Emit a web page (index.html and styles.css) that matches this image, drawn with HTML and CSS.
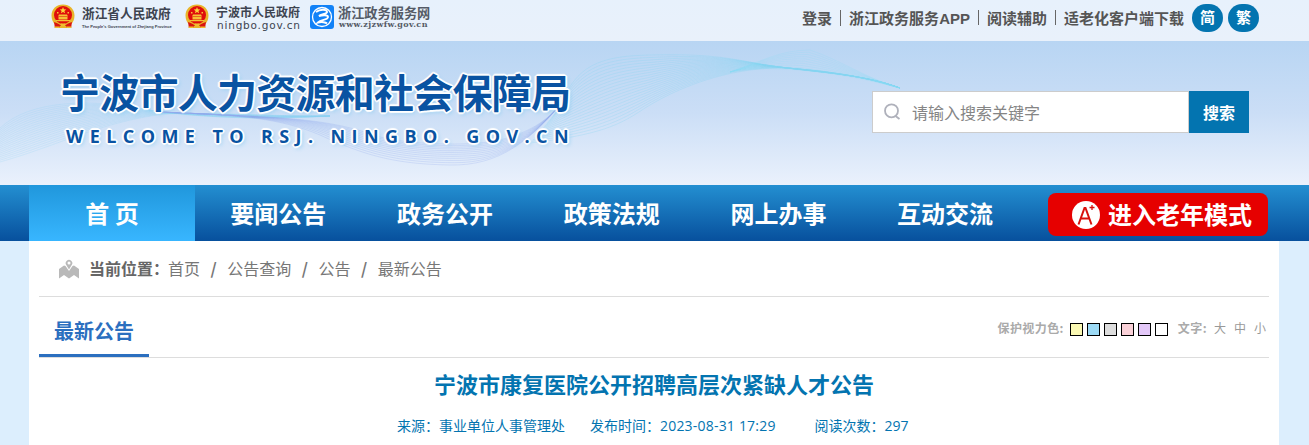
FILE: index.html
```
<!DOCTYPE html>
<html lang="zh-CN">
<head>
  <meta charset="UTF-8">
  <title>宁波市康复医院公开招聘高层次紧缺人才公告</title>
  <link rel="stylesheet" href="styles.css">
</head>
<body>

<svg width="0" height="0" class="defs">
  <symbol id="emblem" viewBox="0 0 24 25">
    <path d="M12 .5C18.500.5 23.500 5 23.500 11.500c0 4-1.500 7-3.500 9l.5 3.500H3.500L4 20.500C2 18.500.5 15.500.5 11.500.5 5 5.500.5 12 .5z" fill="#e9b52b"/>
    <circle cx="12" cy="11" r="9" fill="#df0d0c"/>
    <path d="M12 3l.9 2.300 2.400.1-1.900 1.500.7 2.300-2.100-1.300-2.100 1.300.7-2.300-1.900-1.500 2.400-.1z" fill="#fbd33a"/>
    <path d="M6 8h1.500v1.500H6zM16.500 8H18v1.500h-1.500zM8 10.500h8l1 2H7zM7.500 13h9v2.500h-9zM5 16h14v1.300H5z" fill="#f5c135"/>
    <path d="M3 18c3 1 5 1.500 6.500 3.500h5C16 19.500 18 19 21 18l-1 6h-4l-1-2H9l-1 2H4z" fill="#d91410"/>
    <path d="M4 22.500h4.500v1.500H4zM15.500 22.500H20v1.500h-4.500zM10 19.500h4v2.500h-4z" fill="#f0bd32"/>
  </symbol>
</svg>

<div class="topbar">
  <div class="links">
    <a class="gov gov-zj">
      <svg class="emblem"><use href="#emblem"/></svg>
      <span class="gov-text"><b>浙江省人民政府</b><i>The People's Government of Zhejiang Province</i></span>
    </a>
    <a class="gov gov-nb">
      <svg class="emblem"><use href="#emblem"/></svg>
      <span class="gov-text"><b>宁波市人民政府</b><i>ningbo.gov.cn</i></span>
    </a>
    <a class="gov gov-fw">
      <svg class="fw-icon" viewBox="0 0 24 24">
        <rect width="24" height="24" rx="3" fill="#1282f7"/>
        <circle cx="12" cy="12" r="9.500" fill="none" stroke="#fff" stroke-width="1.300"/>
        <path d="M6 7c4-3 10-3 11-.5 1 2.500-6 2.500-8 4.500 3-1 9-1.500 9 1 0 3-7 2.500-10 5.500 4-1 8 0 9 1" fill="none" stroke="#fff" stroke-width="1.900"/>
      </svg>
      <span class="gov-text"><b>浙江政务服务网</b><i>www.zjzwfw.gov.cn</i></span>
    </a>
  </div>
  <div class="user">
    <a>登录</a><a>浙江政务服务<span class="app">APP</span></a><a>阅读辅助</a><a>适老化客户端下载</a>
    <span class="lang">简</span><span class="lang">繁</span>
  </div>
</div>

<div class="header">
  <svg class="waves" id="waves" viewBox="0 41 1309 144" preserveAspectRatio="none"></svg>
  <div class="logo">
    <h1>宁波市人力资源和社会保障局</h1>
    <p>WELCOME TO RSJ. NINGBO. GOV.CN</p>
  </div>
  <form class="search" onsubmit="return false;">
    <div class="search-box">
      <svg width="17" height="18" viewBox="0 0 17 18"><circle cx="7.500" cy="7.800" r="6.500" fill="none" stroke="#afb1bb" stroke-width="1.800"/><path d="M11.500 13l4 3" stroke="#afb1bb" stroke-width="1.800"/></svg>
      <input type="text" placeholder="请输入搜索关键字">
    </div>
    <button>搜索</button>
  </form>
</div>

<div class="nav">
  <div class="nav-in">
    <a class="on">首 页</a>
    <a>要闻公告</a>
    <a>政务公开</a>
    <a>政策法规</a>
    <a>网上办事</a>
    <a>互动交流</a>
    <div class="old">
      <svg width="28" height="28" viewBox="0 0 28 28">
        <circle cx="14" cy="14" r="14" fill="#fff"/>
        <path d="M6.500 23.500L12.500 7h1L19.500 23.500M9 17.500h8.500" fill="none" stroke="#d8100c" stroke-width="2"/>
        <path d="M17.500 6.500h5M20 4v5" fill="none" stroke="#d8100c" stroke-width="1.300"/>
      </svg>
      <span>进入老年模式</span>
    </div>
  </div>
</div>

<div class="container">
  <div class="position">
    <svg width="20" height="20" viewBox="0 0 20 20">
      <path d="M0 10l5-3.500 1.500.5 3.500 5 3.500-5 1.500-.5 5 3.500v9.500l-5-3.500-5 3.500-5-3.500-5 3.500z" fill="#b9b9b9"/>
      <path d="M10 10.500L7.300 6a3.300 3.300 0 1 1 5.400 0z" fill="#b9b9b9"/>
      <circle cx="10" cy="4" r="1.500" fill="#fff"/>
    </svg>
    <b>当前位置：</b><a>首页</a><i>/</i><a>公告查询</a><i>/</i><a>公告</a><i>/</i><a>最新公告</a>
  </div>
  <div class="bar">
    <h2>最新公告</h2>
    <div class="tools">
      <b>保护视力色:</b>
      <div class="colors">
        <span class="c1"></span><span class="c2"></span><span class="c3"></span><span class="c4"></span><span class="c5"></span><span class="c6"></span>
      </div>
      <b class="size">文字:</b>
      <a>大</a><a>中</a><a>小</a>
    </div>
  </div>
  <h3>宁波市康复医院公开招聘高层次紧缺人才公告</h3>
  <div class="meta">
    <span>来源：事业单位人事管理处</span>
    <span>发布时间：<em>2023-08-31 17:29</em></span>
    <span>阅读次数：297</span>
  </div>
</div>

<script src="waves.js"></script>
</body>
</html>
```
FILE: styles.css
```
* {
  box-sizing: border-box;
}
body {
  margin: 0;
  height: 445px;
  overflow: hidden;
  background-color: #dceefd;
  font-family: "Open Sans", "Noto Sans CJK SC", sans-serif;
}
h1, h2, h3, p {
  margin: 0;
}
i, em {
  font-style: normal;
}
.defs {
  position: absolute;
}
.topbar {
  display: flex;
  justify-content: space-between;
  height: 41px;
  padding: 0 50px 0 51px;
  background: linear-gradient(#e7f1fc, #e9f1fb);
}
.links {
  display: flex;
}
.gov {
  display: flex;
  color: #3d4450;
}
.emblem {
  width: 24px;
  height: 25px;
  margin-top: 4px;
}
.gov-text {
  display: flex;
  flex-direction: column;
  white-space: nowrap;
}
.gov-text b {
  height: 14px;
  margin-top: 6px;
  font-size: 12.7px;
  line-height: 14px;
}
.gov-zj {
  width: 134px;
}
.gov-zj .gov-text {
  margin-left: 7px;
}
.gov-zj i {
  margin-top: 4px;
  font: bold 4px/5px "Liberation Sans", sans-serif;
}
.gov-nb {
  width: 125px;
}
.gov-nb .gov-text {
  margin-left: 7px;
}
.gov-nb b {
  font-size: 12px;
}
.gov-nb i {
  margin-left: 1px;
  font: 10.5px/10px "DejaVu Sans", sans-serif;
  letter-spacing: 0.8px;
}
.fw-icon {
  width: 24px;
  height: 24px;
  margin-top: 5px;
}
.gov-fw .gov-text {
  margin-left: 4px;
  color: #555b66;
}
.gov-fw b {
  font-size: 13.2px;
}
.gov-fw i {
  margin-left: 1px;
  font: bold 8px/8px "DejaVu Serif", serif;
  letter-spacing: 0.4px;
}
.user {
  display: flex;
  align-items: center;
  height: 35px;
  color: #555;
  font: bold 15px/15px "Noto Sans CJK SC", sans-serif;
}
.user a + a {
  margin-left: 8px;
  padding-left: 8px;
  border-left: 1px solid #666;
}
.app {
  font-family: "Liberation Sans", sans-serif;
}
.lang {
  width: 31px;
  height: 28px;
  margin-left: 5px;
  border-radius: 14px;
  background-color: #0374b0;
  color: #fff;
  line-height: 26px;
  text-align: center;
}
a + .lang {
  margin-left: 8px;
}
.header {
  position: relative;
  display: flex;
  justify-content: space-between;
  height: 144px;
  padding: 0 60px 0 61px;
  background: linear-gradient(#b8d5f3, #cbdef6 50%, #eaf1fc);
}
.waves {
  position: absolute;
  left: 0;
  top: 0;
  width: 1309px;
  height: 144px;
}
.logo {
  position: relative;
  color: #0953a2;
  white-space: nowrap;
  text-shadow: 0 0 2px #fff, 0 0 2px #fff, 1px 1px 0 #fff, -1px -1px 0 #fff, 1px -1px 0 #fff, -1px 1px 0 #fff, 2px 0 1px #fff, -2px 0 1px #fff, 0 2px 1px #fff, 0 -2px 1px #fff, 2px 2px 4px #8fcdf0;
}
.logo h1 {
  margin: 26px 0 0 -1px;
  font: bold 40px/48px "Noto Sans CJK SC", sans-serif;
  letter-spacing: -0.75px;
}
.logo p {
  margin: 9px 0 0 5px;
  font-size: 18px;
  font-weight: 700;
  line-height: 24px;
  letter-spacing: 6.4px;
}
.search {
  position: relative;
  display: flex;
  height: 42px;
  margin-top: 50px;
}
.search-box {
  display: flex;
  align-items: center;
  width: 317px;
  padding-left: 11px;
  border: 1px solid #ccc;
  background-color: #fff;
}
.search input {
  width: 250px;
  margin-left: 11px;
  padding: 0;
  border: none;
  outline: none;
  font: 16px "Noto Sans CJK SC", sans-serif;
}
.search input::placeholder {
  color: #858585;
}
.search button {
  width: 60px;
  padding: 0;
  border: none;
  background-color: #0374b0;
  color: #fff;
  font: bold 16px "Noto Sans CJK SC", sans-serif;
}
.nav {
  height: 56px;
  background: linear-gradient(#238fd1, #07509d);
}
.nav-in {
  display: flex;
  width: 1250px;
  margin-left: 29px;
}
.nav a {
  width: 166.7px;
  height: 56px;
  color: #fff;
  font: bold 24px/55px "Noto Sans CJK SC", sans-serif;
  text-align: center;
}
.nav .on {
  width: 166px;
  background: linear-gradient(#2097dc, #38b6ff);
}
.old {
  display: flex;
  align-items: center;
  width: 220px;
  height: 43px;
  margin: 8px 0 0 19.500px;
  padding-left: 24px;
  border-radius: 8px;
  background-color: #e60000;
  color: #fff;
  font: bold 24px/42px "Noto Sans CJK SC", sans-serif;
  white-space: nowrap;
}
.old span {
  margin: -2px 0 0 8px;
}
.container {
  width: 1250px;
  height: 204px;
  margin-left: 29px;
  padding: 0 10px;
  background-color: #fff;
}
.position {
  display: flex;
  align-items: center;
  height: 56px;
  padding-left: 20px;
  border-bottom: 1px solid #ddd;
  color: #777;
  font: 16px/24px "Noto Sans CJK SC", sans-serif;
}
.position a, .position b {
  margin-top: -2px;
}
.position b {
  margin-left: 10px;
  margin-right: -1px;
  color: #666;
}
.position i {
  width: 27.200px;
  margin-top: -1px;
  text-align: center;
  font-weight: bold;
}
.bar {
  display: flex;
  justify-content: space-between;
  height: 61px;
  border-bottom: 1px solid #ddd;
}
.bar h2 {
  height: 60px;
  padding: 0 15px;
  border-bottom: 3px solid #2b6fbf;
  color: #2b6fbf;
  font: bold 20px/67px "Noto Sans CJK SC", sans-serif;
}
.tools {
  display: flex;
  align-items: center;
  height: 61px;
  padding-right: 3px;
  color: #999;
  font: 12px/14px "Noto Sans CJK SC", sans-serif;
}
.tools b {
  color: #aaa;
  letter-spacing: 0.4px;
}
.colors {
  display: flex;
  gap: 4px;
  margin: 3px 10px 0 6px;
}
.colors span {
  width: 13px;
  height: 13px;
  border: 1px solid #000;
}
.c1 { background-color: #faf8b3; }
.c2 { background-color: #9cdaf5; }
.c3 { background-color: #ddd; }
.c4 { background-color: #fad1d8; }
.c5 { background-color: #e3c8f8; }
.c6 { background-color: #fff; }
.tools a {
  margin-left: 8px;
}
.size + a {
  margin-left: 7px;
}
.container h3 {
  height: 54px;
  color: #0374b0;
  font: bold 22px/50px "Noto Sans CJK SC", sans-serif;
  text-align: center;
}
.meta {
  display: flex;
  padding-left: 358px;
  color: #0374b0;
  font-size: 14px;
  line-height: 28px;
}
.meta em {
  letter-spacing: 0.2px;
}
.meta span + span {
  margin-left: 25px;
}
.meta span:last-child {
  margin-left: 39px;
}
```
FILE: waves.js
```
// each band is a set of thin curves between two edge curves: [x, y, x, y, ...]
var bands = [
  { n: 20, color: "#8fd2f0", o: 0.22,
    a: [0,162, 60,145, 100,122, 165,114, 210,112, 260,116, 330,116],
    b: [0,128, 30,100, 90,98, 150,110, 200,118, 260,120, 330,116] },
  { n: 12, color: "#8fa8ec", o: 0.25,
    a: [160,112, 240,115, 280,118, 320,135, 370,158, 400,164, 450,165, 500,166, 530,140, 560,105],
    b: [160,112, 260,117, 320,116, 370,134, 400,145, 470,147, 500,140, 530,132, 545,122, 560,105] },
  { n: 22, color: "#86d3f1", o: 0.28,
    a: [560,108, 575,65, 600,56, 650,55, 700,54, 720,56, 760,64, 800,72, 860,72, 900,88],
    b: [530,143, 600,135, 620,125, 645,108, 690,80, 740,68, 780,68, 830,70, 870,78, 900,88] },
  { n: 10, color: "#86def5", o: 0.2,
    a: [730,72, 760,62, 780,50, 810,50, 840,60, 870,80, 900,88],
    b: [730,72, 750,68, 770,68, 800,70, 840,74, 870,80, 900,88] }
];

var svg = document.getElementById("waves");
bands.forEach(function (band) {
  for (var i = 0; i < band.n; i++) {
    var t = i / (band.n - 1);
    var p = band.a.map(function (v, k) { return v + (band.b[k] - v) * t; });
    var path = document.createElementNS("http://www.w3.org/2000/svg", "path");
    path.setAttribute("d", "M" + p.slice(0, 2) + "C" + p.slice(2));
    path.setAttribute("fill", "none");
    path.setAttribute("stroke", band.color);
    path.setAttribute("stroke-opacity", band.o);
    svg.appendChild(path);
  }
});
```
